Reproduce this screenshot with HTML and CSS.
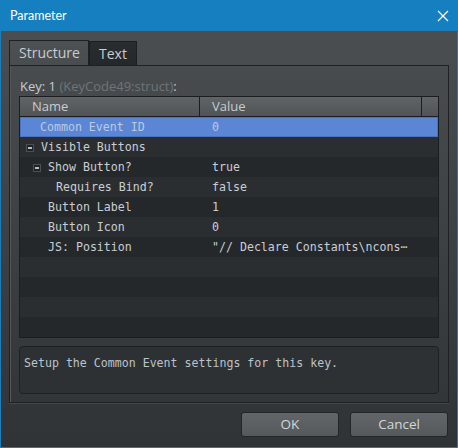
FILE: index.html
```html
<!DOCTYPE html>
<html>
<head>
<meta charset="utf-8">
<link rel="stylesheet" href="styles.css">
</head>
<body>
<div class="window">
  <div class="titlebar">
    <span class="title">Parameter</span>
    <svg class="close" width="12" height="12" viewBox="0 0 12 12"><path d="M1 1L11 11M11 1L1 11" stroke="#ffffff" stroke-width="1.3" fill="none"/></svg>
  </div>
  <div class="content">
    <div class="tabs">
      <div class="tab active">Structure</div>
      <div class="tab">Text</div>
    </div>
    <div class="panel">
      <div class="keylabel">Key: 1 <span class="dim">(KeyCode49:struct)</span>:</div>
      <div class="table">
        <div class="thead">
          <div class="th th-name">Name</div>
          <div class="th th-value">Value</div>
          <div class="th th-spacer"></div>
        </div>
        <div class="row sel"><div class="name ind0">Common Event ID</div><div class="value">0</div></div>
        <div class="row alt"><div class="name ind1"><span class="toggle"></span>Visible Buttons</div><div class="value"></div></div>
        <div class="row"><div class="name ind2"><span class="toggle"></span>Show Button?</div><div class="value">true</div></div>
        <div class="row alt"><div class="name ind3">Requires Bind?</div><div class="value">false</div></div>
        <div class="row"><div class="name ind4">Button Label</div><div class="value">1</div></div>
        <div class="row alt"><div class="name ind4">Button Icon</div><div class="value">0</div></div>
        <div class="row"><div class="name ind4">JS: Position</div><div class="value">"// Declare Constants\ncons⋯</div></div>
        <div class="row alt"></div>
        <div class="row"></div>
        <div class="row alt"></div>
        <div class="row"></div>
      </div>
      <div class="desc">Setup the Common Event settings for this key.</div>
    </div>
    <div class="buttons">
      <div class="btn">OK</div>
      <div class="btn">Cancel</div>
    </div>
  </div>
</div>
</body>
</html>
```
FILE: styles.css
```css
html, body {
  margin: 0;
  padding: 0;
  background: #1a7fc0;
}
.window {
  width: 458px;
  height: 448px;
  box-sizing: border-box;
  background: #167fc0;
  border: 1px solid #167fc0;
  border-top: none;
  display: flex;
  flex-direction: column;
  font-family: "Open Sans", "Noto Sans", sans-serif;
}
.titlebar {
  height: 31px;
  flex: none;
  display: flex;
  align-items: center;
  justify-content: space-between;
  padding: 0 9px 0 9px;
  color: #ffffff;
}
.title {
  font-family: Lato, "Open Sans", sans-serif;
  font-size: 12.5px;
}
.close {
  display: block;
  margin-right: -1px;
}
.content {
  flex: 1;
  background: linear-gradient(#4b4e51, #303336);
  padding: 9px 8px 0 8px;
  display: flex;
  flex-direction: column;
}
.tabs {
  display: flex;
  align-items: flex-end;
  height: 25px;
}
.tab {
  height: 24px;
  box-sizing: border-box;
  border: 1px solid #1c1e20;
  border-bottom: none;
  color: #c8ccd0;
  font-size: 14px;
  line-height: 23px;
  padding: 0 9px;
  background: linear-gradient(#2a2d30, #25282b);
}
.tab.active {
  height: 25px;
  width: 80px;
  padding: 0 0 0 9px;
  background: linear-gradient(#4e5154, #4a4d50);
  border-color: #1e2123;
  line-height: 24px;
}
.panel {
  height: 338px;
  box-sizing: border-box;
  border: 1px solid #1e2123;
  box-shadow: inset 1px 0 0 #54585b, 0 1px 0 #44484b;
  padding: 10px 9px 0 9px;
  display: flex;
  flex-direction: column;
}
.keylabel {
  height: 20px;
  line-height: 20px;
  font-size: 13px;
  color: #c8ccd0;
  padding-left: 1px;
}
.dim {
  color: #6f7478;
}
.table {
  width: 420px;
  box-sizing: border-box;
  border: 1px solid #1b1d1f;
  font-family: "DejaVu Sans Mono", monospace;
  font-size: 11.6px;
  color: #c9ced3;
}
.thead {
  display: flex;
  height: 20px;
  box-sizing: border-box;
  border-bottom: 1px solid #1b1d1f;
  background: linear-gradient(#606467, #505457);
  font-family: "Open Sans", "Noto Sans", sans-serif;
  font-size: 13px;
  color: #c8ccd0;
}
.th {
  box-sizing: border-box;
  line-height: 19px;
}
.th-name {
  width: 180px;
  border-right: 1px solid #1b1d1f;
  padding-left: 12px;
}
.th-value {
  width: 222px;
  border-right: 1px solid #1b1d1f;
  padding-left: 12px;
}
.th-spacer {
  flex: 1;
}
.row {
  display: flex;
  height: 20px;
  box-sizing: border-box;
  background: #25282b;
  padding-top: 1px;
  line-height: 19px;
  white-space: nowrap;
}
.row.alt {
  background: #2b2e31;
}
.row.sel {
  background: #5b86d5;
  border: 1px solid #4a73bf;
  color: #bccae2;
  padding-top: 0;
  line-height: 19px;
}
.name {
  width: 180px;
  box-sizing: border-box;
  display: flex;
  align-items: center;
}
.row.sel .name {
  width: 179px;
}
.value {
  padding-left: 12px;
}
.ind0 { padding-left: 20px; }
.row.sel .ind0 { padding-left: 19px; }
.ind1 { padding-left: 6px; }
.ind2 { padding-left: 13px; }
.ind3 { padding-left: 36px; }
.ind4 { padding-left: 28px; }
.toggle {
  width: 8px;
  height: 8px;
  box-sizing: border-box;
  border: 1px solid #4c5054;
  background: #202325;
  margin-right: 7px;
  position: relative;
  flex: none;
}
.toggle::after {
  content: "";
  position: absolute;
  left: 1px;
  right: 1px;
  top: 2px;
  height: 2px;
  background: #b8bdc2;
}
.desc {
  margin-top: 8px;
  width: 420px;
  height: 48px;
  box-sizing: border-box;
  border: 1px solid #1e2124;
  border-radius: 4px;
  background: #2e3134;
  font-family: "DejaVu Sans Mono", monospace;
  font-size: 11.6px;
  color: #bcc3ca;
  padding: 8px 4px 6px 4px;
  line-height: 16px;
}
.buttons {
  display: flex;
  justify-content: flex-end;
  gap: 11px;
  margin-top: 9px;
  padding-right: 1px;
}
.btn {
  width: 98px;
  height: 25px;
  box-sizing: border-box;
  border: 1px solid #232628;
  border-radius: 3px;
  background: linear-gradient(#62666a, #55595c);
  color: #d2d6da;
  font-size: 13.5px;
  line-height: 23px;
  text-align: center;
}
```
